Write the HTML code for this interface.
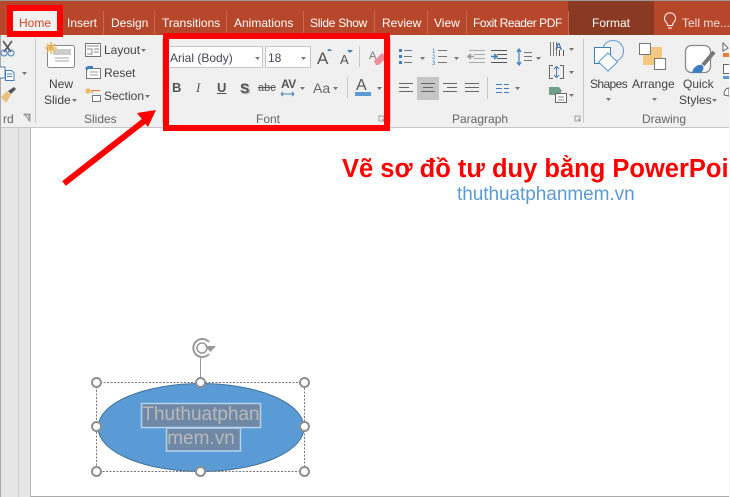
<!DOCTYPE html>
<html><head><meta charset="utf-8">
<style>
html,body{margin:0;padding:0}
body{width:730px;height:497px;overflow:hidden;position:relative;background:#fff;font-family:"Liberation Sans",sans-serif}
.t{position:absolute;white-space:nowrap;line-height:14px}
.tab{color:#fff;font-size:12px;top:16px}
.r{color:#444;font-size:12px}
.g{color:#666;font-size:12px}
.sep{position:absolute;background:#c9c9c9;width:1px}
.ts{position:absolute;background:#c9694f;width:1px;top:11px;height:24px}
svg{position:absolute;left:0;top:0}
</style></head>
<body>
<div style="position:absolute;left:0;top:0;width:730px;height:35px;background:#b7472a"></div>
<div style="position:absolute;left:0;top:0;width:730px;height:1px;background:#999"></div>
<div style="position:absolute;left:568px;top:1px;width:86px;height:34px;background:#8a3a22"></div>
<div style="position:absolute;left:0;top:35px;width:730px;height:92px;background:#f0f0f0"></div>
<div style="position:absolute;left:0;top:127px;width:730px;height:1px;background:#c6c6c6"></div>
<div style="position:absolute;left:0;top:128px;width:31px;height:369px;background:#e6e6e6"></div>
<div style="position:absolute;left:0;top:35px;width:1px;height:462px;background:#aaa"></div>
<div style="position:absolute;left:18px;top:128px;width:1px;height:369px;background:#d0d0d0"></div>
<div style="position:absolute;left:30px;top:128px;width:1px;height:369px;background:#bbb"></div>
<div style="position:absolute;left:31px;top:496px;width:699px;height:1px;background:#aaa"></div>

<div class="ts" style="left:103px"></div><div class="ts" style="left:154px"></div><div class="ts" style="left:226px"></div><div class="ts" style="left:303px"></div><div class="ts" style="left:374px"></div><div class="ts" style="left:427px"></div><div class="ts" style="left:466px"></div><div class="ts" style="left:568px"></div>
<div class="t tab" style="left:67px">Insert</div>
<div class="t tab" style="left:111px">Design</div>
<div class="t tab" style="left:162px">Transitions</div>
<div class="t tab" style="left:234px">Animations</div>
<div class="t tab" style="left:310px;letter-spacing:-.3px">Slide Show</div>
<div class="t tab" style="left:382px">Review</div>
<div class="t tab" style="left:434px">View</div>
<div class="t tab" style="left:473px;letter-spacing:-.45px">Foxit Reader PDF</div>
<div class="t tab" style="left:592px">Format</div>
<div class="t tab" style="left:682px;color:#f6dfd8">Tell me...</div>

<div style="position:absolute;left:7px;top:5px;width:44px;height:20px;border:6px solid #f00;background:#f0f0f0"></div>
<div class="t" style="left:19px;top:16px;font-size:12px;color:#d24726">Home</div>

<div class="sep" style="left:35px;top:39px;height:84px"></div>
<div class="sep" style="left:162px;top:39px;height:84px"></div>
<div class="sep" style="left:390px;top:39px;height:84px"></div>
<div class="sep" style="left:583px;top:39px;height:84px"></div>

<div class="t g" style="left:3px;top:112px">rd</div>
<div class="t g" style="left:84px;top:112px">Slides</div>
<div class="t g" style="left:256px;top:112px">Font</div>
<div class="t g" style="left:452px;top:112px">Paragraph</div>
<div class="t g" style="left:642px;top:112px">Drawing</div>

<div class="t r" style="left:49px;top:77px">New</div>
<div class="t r" style="left:44px;top:93px">Slide</div>
<div class="t r" style="left:104px;top:43px">Layout</div>
<div class="t r" style="left:104px;top:66px">Reset</div>
<div class="t r" style="left:104px;top:89px">Section</div>
<div class="t r" style="left:590px;top:77px;letter-spacing:-.6px">Shapes</div>
<div class="t r" style="left:632px;top:77px">Arrange</div>
<div class="t r" style="left:683px;top:77px">Quick</div>
<div class="t r" style="left:679px;top:93px">Styles</div>

<div style="position:absolute;left:168px;top:46px;width:95px;height:22px;background:#fff;border:1px solid #c6c6c6;border-left:0;box-sizing:border-box"></div>
<div style="position:absolute;left:265px;top:46px;width:46px;height:22px;background:#fff;border:1px solid #c6c6c6;box-sizing:border-box"></div>
<div class="t" style="left:170px;top:51px;font-size:12px;color:#445">Arial (Body)</div>
<div class="t" style="left:268px;top:51px;font-size:12px;color:#445">18</div>

<div class="t" style="left:172px;top:81px;font-size:13px;font-weight:bold;color:#555">B</div>
<div class="t" style="left:196px;top:81px;font-size:13px;font-style:italic;color:#555;font-family:'Liberation Serif',serif">I</div>
<div class="t" style="left:217px;top:81px;font-size:13px;font-weight:bold;color:#555;text-decoration:underline">U</div>
<div class="t" style="left:240px;top:81px;font-size:14px;font-weight:bold;color:#555;text-shadow:1px 1px 1px #999">S</div>
<div class="t" style="left:258px;top:81px;font-size:11px;color:#555;text-decoration:line-through">abc</div>
<div class="t" style="left:281px;top:77px;font-size:12px;font-weight:bold;color:#555;letter-spacing:-.5px">AV</div>
<div class="t" style="left:313px;top:81px;font-size:14px;color:#666">Aa</div>
<div class="t" style="left:317px;top:52px;font-size:17px;color:#555">A</div>
<div class="t" style="left:340px;top:53px;font-size:13px;color:#555">A</div>
<div class="t" style="left:356px;top:79px;font-size:16px;color:#555">A</div>
<div class="t" style="left:369px;top:49px;font-size:11px;color:#777">A</div>
<div class="t" style="left:555px;top:41px;font-size:10px;font-weight:bold;color:#3b78b8">A</div>

<div class="t" style="left:342px;top:155px;font-size:25.5px;line-height:28px;font-weight:bold;color:#f00;width:388px;overflow:hidden">Vẽ sơ đồ tư duy bằng PowerPoint</div>
<div class="t" style="left:457px;top:184px;font-size:19px;line-height:22px;color:#5b9bd5;letter-spacing:-.05px">thuthuatphanmem.vn</div>

<svg width="730" height="497" viewBox="0 0 730 497" fill="none">
 <text x="432" y="53" font-size="6" font-family="Liberation Sans" fill="#3f7fbf">1</text>
 <text x="432" y="59" font-size="6" font-family="Liberation Sans" fill="#3f7fbf">2</text>
 <text x="432" y="65" font-size="6" font-family="Liberation Sans" fill="#3f7fbf">3</text>
 <!-- carets -->
 <g fill="#777">
  <path d="M22 72h5l-2.500 3zM141 49h5l-2.500 3zM145 95h5l-2.500 3zM72 99h5l-2.500 3zM255 57h5l-2.500 3zM301 57h5l-2.500 3zM300 87h5l-2.500 3zM333 87h5l-2.500 3zM377 87h5l-2.500 3zM420 57h5l-2.500 3zM454 57h5l-2.500 3zM536 57h5l-2.500 3zM515 87h5l-2.500 3zM569 48h5l-2.500 3zM569 71h5l-2.500 3zM569 94h5l-2.500 3zM606 98h5l-2.500 3zM652 98h5l-2.500 3zM712 99h5l-2.500 3z"/>
 </g>
 <!-- clipboard group -->
 <path d="M3 41l8 11M12 41l-8 11" stroke="#555" stroke-width="1.600"/>
 <circle cx="4" cy="53" r="3" stroke="#3f7fbf"/><circle cx="11" cy="53" r="3" stroke="#3f7fbf"/>
 <path d="M0 67h5v11h-5" stroke="#3f7fbf" fill="#fff"/>
 <path d="M5.500 70.500h6l2.500 2.500v7.500h-8.500z" stroke="#3f7fbf" fill="#fff"/><path d="M7 74h5M7 76.500h5" stroke="#3f7fbf"/>
 <path d="M1 97l6-6 4 4-5 8z" fill="#e9c27d"/><path d="M8 91l6-4 2 2-5 5z" fill="#555"/>
 <path d="M29 121v-6h-5v-1h6v7zM25 115l4 5" stroke="#888" stroke-width=".8"/>
 <!-- new slide -->
 <rect x="47.500" y="45.500" width="27" height="22" rx="2" fill="#fff" stroke="#888"/>
 <rect x="53" y="49" width="18" height="6" fill="#ccc"/>
 <path d="M55 58h14M55 61h14" stroke="#aaa"/>
 <path d="M51 42v12M45 48h12M47 44l8 8M55 44l-8 8" stroke="#e9b44c" stroke-width="1.500"/>
 <!-- layout / reset / section -->
 <rect x="85.500" y="43.500" width="15" height="13" fill="#fff" stroke="#777"/><path d="M87 46h12M87 49h5v5h-5M94 49h5M94 52h5" stroke="#888"/>
 <rect x="86.500" y="68.500" width="14" height="10" fill="#fff" stroke="#777"/><path d="M90 72h8M90 75h8" stroke="#999"/><path d="M93 66h-5l-3 2 2 3 1-2h5z" fill="#3f7fbf"/>
 <path d="M88 88v6M85 91h6M86 89l4 4M90 89l-4 4" stroke="#e9b44c"/><path d="M92 90.500h8M92 90v3" stroke="#e2762f"/><rect x="92.500" y="95.500" width="8" height="6" fill="#fff" stroke="#777"/>
 <!-- font small -->
 <path d="M327 51l2.500-2.500 2.500 2.500z" fill="#3f7fbf"/><path d="M347 50h6l-3 3z" fill="#3f7fbf"/>
 <path d="M359.500 46v21M347.500 77v21" stroke="#c9c9c9"/>
 <path d="M374 61l8-8 5 4-8 8h-3z" fill="#ee8d9b"/>
 <rect x="355" y="92" width="16" height="4" fill="#5b9bd5"/>
 <path d="M281 94h13M281 94l2-2M281 94l2 2M294 94l-2-2M294 94l-2 2" stroke="#3f7fbf"/>
 <path d="M379 116h5v5h-5zM382 119l2 2" stroke="#888" stroke-width=".8"/>
 <!-- paragraph: bullets -->
 <g fill="#3f7fbf"><rect x="399" y="49" width="3" height="3"/><rect x="399" y="55" width="3" height="3"/><rect x="399" y="61" width="3" height="3"/></g>
 <path d="M404 50.500h8M404 56.500h8M404 62.500h8M438 50.500h9M438 56.500h9M438 62.500h9" stroke="#777"/>
 <path d="M469 50.500h16M474 54.500h11M474 58.500h11M469 62.500h16" stroke="#aaa"/><path d="M474 56.500h-5M471 54l-3 2.500 3 2.500" stroke="#999" stroke-width="1.500"/>
 <path d="M491 50.500h16M497 54.500h10M497 58.500h10M491 62.500h16" stroke="#555"/><path d="M491 56.500h5M494 54l3 2.500-3 2.500" stroke="#3f7fbf" stroke-width="1.500"/>
 <path d="M519 50v14M517 52l2-3 2 3M517 62l2 3 2-3" stroke="#3f7fbf" stroke-width="1.200"/>
 <path d="M524 52.500h8M524 56.500h8M524 60.500h8" stroke="#777"/>
 <path d="M550.500 42v14M553.500 42v14M556.500 42v14" stroke="#777"/><path d="M559.500 50v6M563.500 50v6" stroke="#555"/>
 <path d="M553 65.500h-3.500v13h3.500M560 65.500h3.500v13h-3.500" stroke="#666"/><path d="M556.500 66v12M554 69l2.500-2.500 2.500 2.500M554 75l2.500 2.500 2.500-2.500" stroke="#3f7fbf"/>
 <path d="M549 87h10l3 4-3 4h-10z" fill="#6fa08a"/><rect x="555.500" y="93.500" width="11" height="9" fill="#fff" stroke="#666"/><path d="M558 97h6M558 100h6" stroke="#888"/>
 <!-- alignment -->
 <rect x="417" y="77" width="22" height="23" fill="#c6c6c6"/>
 <path d="M399 83.500h14M399 87.500h10M399 91.500h14M421 83.500h14M423 87.500h10M421 91.500h14M443 83.500h14M447 87.500h10M443 91.500h14M465 83.500h14M465 87.500h14M465 91.500h14" stroke="#666"/>
 <path d="M487.500 77v22" stroke="#c9c9c9"/>
 <path d="M496 84.500h6M504 84.500h5M496 88.500h6M504 88.500h5M496 92.500h6M504 92.500h5" stroke="#3f7fbf"/>
 <path d="M575 116h5v5h-5zM578 119l2 2" stroke="#888" stroke-width=".8"/>
 <!-- shapes -->
 <circle cx="613" cy="51" r="10.500" stroke="#5b9bd5" fill="#f0f0f0"/>
 <rect x="594.500" y="47.500" width="16" height="16" fill="#fff" stroke="#3f7fbf"/>
 <path d="M608 53l9.500 9-9.500 9-9.500-9z" fill="#fff" stroke="#5b9bd5"/>
 <!-- arrange -->
 <rect x="643" y="47" width="19" height="18" fill="#f1c97f"/>
 <rect x="639.500" y="43.500" width="11" height="11" fill="#fff" stroke="#777"/>
 <rect x="654.500" y="58.500" width="11" height="11" fill="#fff" stroke="#777"/>
 <!-- quick styles -->
 <rect x="685.500" y="45.500" width="25" height="27" rx="6" fill="#fff" stroke="#888" stroke-width="1.300"/>
 <path d="M714 52l-11 13" stroke="#777" stroke-width="4"/>
 <path d="M692 73c1-6 6-9 10-8 3 2 1 7-2 8z" fill="#3f7fbf"/>
 <!-- drawing tools -->
 <path d="M723 43l5 5-5 3z" fill="#fff" stroke="#666"/><rect x="723" y="53" width="6" height="4" fill="#ed7d31"/>
 <rect x="723.500" y="64.500" width="6" height="9" fill="#fff" stroke="#666"/><rect x="723" y="76" width="6" height="3" fill="#5b9bd5"/>
 <path d="M724 95c0-4 2-7 5-7v8z" fill="#fff" stroke="#666"/>
 <rect x="729" y="35" width="1" height="462" fill="#f5f5f5"/>
 <!-- bulb -->
 <path d="M667.500 25.500l-.5-2.500a5.500 5.500 0 1 1 6 0l-.5 2.500z" stroke="#fff"/><path d="M668 28h4" stroke="#fff"/>
 <!-- font red box -->
 <rect x="166" y="36" width="221" height="92" stroke="#f00" stroke-width="6"/>
 <!-- arrow -->
 <path d="M64 183.500L148 118" stroke="#f00" stroke-width="6"/>
 <path d="M156 110L137 113L148 127z" fill="#f00"/>
 <!-- ellipse -->
 <ellipse cx="201" cy="427.500" rx="103" ry="44" fill="#5b9bd5" stroke="#41719c"/>
 <rect x="96.500" y="382.500" width="208" height="89" stroke="#777" stroke-dasharray="2 1.500"/>
 <path d="M200.500 358v24" stroke="#999"/>
 <rect x="141.500" y="403.500" width="119" height="24" fill="#6f88a6" stroke="#b6d3ee" stroke-width="1.500"/>
 <rect x="166.500" y="428" width="74" height="23" fill="#6f88a6" stroke="#b6d3ee" stroke-width="1.500"/>
 <g fill="#fff" stroke="#8f8f8f" stroke-width="2">
  <circle cx="96.500" cy="382.500" r="4.500"/><circle cx="200.500" cy="382.500" r="4.500"/><circle cx="304.500" cy="382.500" r="4.500"/>
  <circle cx="96.500" cy="426.500" r="4.500"/><circle cx="304.500" cy="426.500" r="4.500"/>
  <circle cx="96.500" cy="471.500" r="4.500"/><circle cx="200.500" cy="471.500" r="4.500"/><circle cx="304.500" cy="471.500" r="4.500"/>
 </g>
 <path d="M209 354a9 9 0 1 1 0-12" stroke="#999" stroke-width="2"/>
 <circle cx="202" cy="348" r="5" stroke="#999" stroke-width="1.500"/>
 <path d="M205 346h11l-5.500 6z" fill="#999"/>
</svg>
<div class="t" style="left:142px;top:403px;width:118px;text-align:center;font-size:19px;line-height:24px;color:#b9b9b9">Thuthuatphan</div>
<div class="t" style="left:142px;top:427px;width:118px;text-align:center;font-size:19px;line-height:24px;color:#b9b9b9">mem.vn</div>
</body></html>
